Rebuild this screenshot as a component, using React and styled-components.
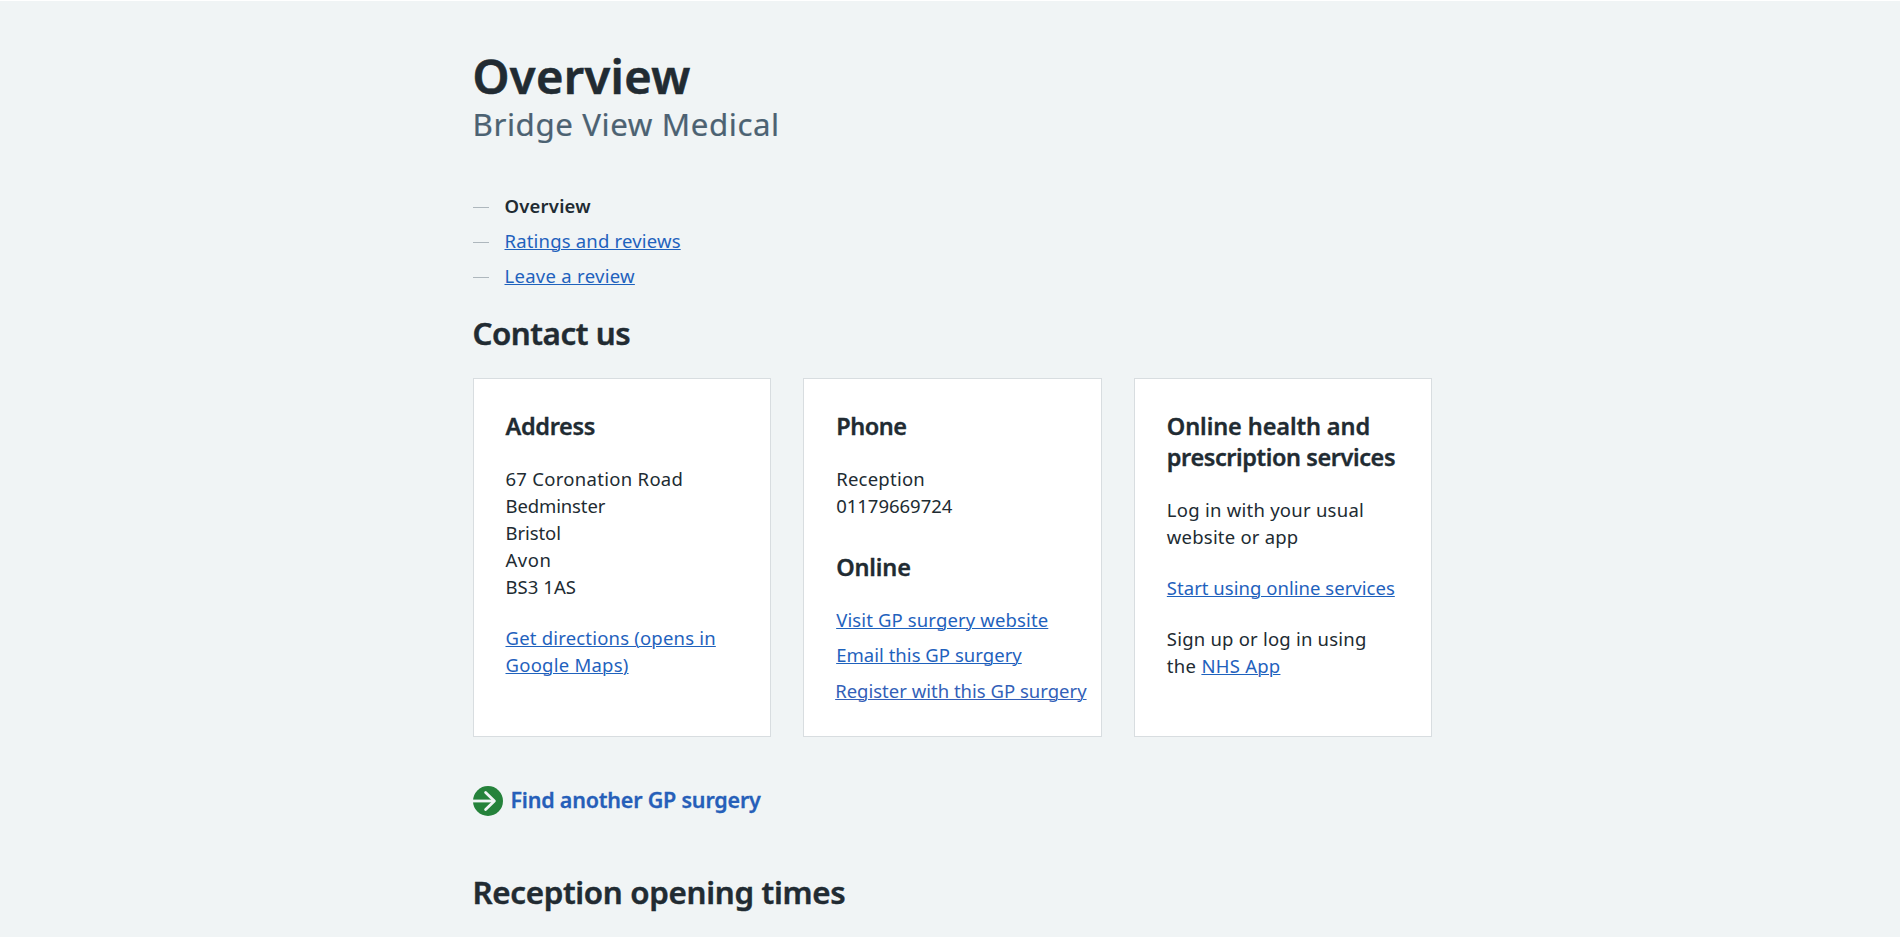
import React from "react";
import styled, { createGlobalStyle } from "styled-components";

const GlobalStyle = createGlobalStyle`
  html, body { margin: 0; background: #f0f4f5; }
  body {
    height: 937px;
    overflow: hidden;
    color: #212b32;
    font-family: "Noto Sans", "Open Sans", sans-serif;
    font-size: 18.5px;
    line-height: 27px;
  }
  *, *::before, *::after { box-sizing: border-box; }
`;

const Page = styled.div`
  height: 937px;
  overflow: hidden;
  border-top: 1px solid #fff;
  padding-top: 47px;
`;

const Container = styled.main`
  width: 960px;
  margin-left: 472.5px;
`;

const Run = styled.span`
  letter-spacing: ${(p) => p.$track || 0}px;
  white-space: nowrap;
`;

const PageTitle = styled.h1`
  margin: 0;
  font-size: 47px;
  font-weight: 600;
  line-height: 56px;
  -webkit-text-stroke: 0.6px currentColor;
`;

const Caption = styled.p`
  margin: 0;
  font-size: 31.3px;
  line-height: 40px;
  color: #4c6272;
  -webkit-text-stroke: 0.2px currentColor;
`;

const ContentsList = styled.ol`
  list-style: none;
  margin: 48px 0 0;
  padding: 0;
  display: flex;
  flex-direction: column;
  gap: 8px;
`;

const ContentsItem = styled.li`
  display: flex;
  align-items: center;
  gap: 16px;
  font-weight: ${(p) => (p.$current ? 600 : 400)};

  &::before {
    content: "";
    width: 16px;
    height: 1px;
    margin-top: 3px;
    background: #aeb7bd;
  }
`;

const Link = styled.a`
  color: ${(p) => (p.$muted ? "#335fb8" : "#1f62bd")};
  text-decoration: underline;
  text-decoration-thickness: 1px;
  text-underline-offset: 1px;
`;

const SectionHeading = styled.h2`
  margin: ${(p) => p.$top}px 0 0;
  font-size: 31.3px;
  font-weight: 600;
  line-height: 40px;
  white-space: nowrap;
  -webkit-text-stroke: 0.45px currentColor;
`;

const CardGroup = styled.div`
  margin-top: 25px;
  display: grid;
  grid-template-columns: repeat(3, 1fr);
  column-gap: 32px;
  height: 359px;
`;

const Card = styled.section`
  min-width: 0;
  background: #fff;
  border: 1px solid #d8dde0;
  padding: 32px 0 0 32px;
`;

const CardHeading = styled.h3`
  margin: ${(p) => p.$top || 0}px 0 23px;
  font-size: 23.5px;
  font-weight: 600;
  line-height: 31px;
  -webkit-text-stroke: 0.35px currentColor;
`;

const Paragraph = styled.p`
  margin: 0 0 ${(p) => p.$bottom ?? 24}px;
`;

const LinkList = styled.ul`
  list-style: none;
  margin: 0;
  padding: 0;
  display: flex;
  flex-direction: column;
  gap: 8px;
`;

const LastLink = styled.li`
  margin: 1px 0 0 -1px;
`;

const ActionLink = styled.a`
  display: flex;
  align-items: center;
  gap: 8px;
  margin-top: 49px;
  height: 30px;
  color: #265fb9;
  font-size: 21.5px;
  font-weight: 600;
  line-height: 30px;
  text-decoration: none;
  -webkit-text-stroke: 0.3px currentColor;
`;

const ActionText = styled.span`
  padding-bottom: 2px;
`;

const ActionIcon = styled.svg`
  width: 30px;
  height: 30px;
  flex: none;
`;

function Lines({ items }) {
  return items.map(([text, track], i) => (
    <React.Fragment key={text}>
      {i > 0 && <br />}
      <Run $track={track}>{text}</Run>
    </React.Fragment>
  ));
}

export default function App() {
  return (
    <>
      <GlobalStyle />
      <Page>
        <Container>
          <PageTitle><Run $track={0.36}>Overview</Run></PageTitle>
          <Caption><Run $track={0.58}>Bridge View Medical</Run></Caption>

          <ContentsList>
            <ContentsItem $current><Run $track={0.2}>Overview</Run></ContentsItem>
            <ContentsItem><Link><Run $track={0.18}>Ratings and reviews</Run></Link></ContentsItem>
            <ContentsItem><Link><Run $track={0.28}>Leave a review</Run></Link></ContentsItem>
          </ContentsList>

          <SectionHeading $top={24}><Run $track={-0.46}>Contact us</Run></SectionHeading>

          <CardGroup>
            <Card>
              <CardHeading><Run $track={-0.33}>Address</Run></CardHeading>
              <Paragraph>
                <Lines
                  items={[
                    ["67 Coronation Road", 0.29],
                    ["Bedminster", -0.12],
                    ["Bristol", -0.08],
                    ["Avon", 0.55],
                    ["BS3 1AS", 0.05],
                  ]}
                />
              </Paragraph>
              <Paragraph>
                <Link>
                  <Lines items={[["Get directions (opens in", 0.19], ["Google Maps)", 0.24]]} />
                </Link>
              </Paragraph>
            </Card>

            <Card>
              <CardHeading><Run $track={-0.48}>Phone</Run></CardHeading>
              <Paragraph $bottom={0}>
                <Lines items={[["Reception", 0.24], ["01179669724", -0.02]]} />
              </Paragraph>
              <CardHeading $top={33}><Run $track={-0.16}>Online</Run></CardHeading>
              <LinkList>
                <li><Link><Run $track={0.13}>Visit GP surgery website</Run></Link></li>
                <li><Link><Run $track={0.03}>Email this GP surgery</Run></Link></li>
                <LastLink><Link $muted><Run>Register with this GP surgery</Run></Link></LastLink>
              </LinkList>
            </Card>

            <Card>
              <CardHeading>
                <Lines items={[["Online health and", -0.1], ["prescription services", -0.42]]} />
              </CardHeading>
              <Paragraph>
                <Lines items={[["Log in with your usual", 0.25], ["website or app", 0.21]]} />
              </Paragraph>
              <Paragraph>
                <Link><Run $track={0.03}>Start using online services</Run></Link>
              </Paragraph>
              <Paragraph>
                <Run $track={0.21}>Sign up or log in using</Run>
                <br />
                <Run $track={0.3}>the </Run>
                <Link><Run $track={0.25}>NHS App</Run></Link>
              </Paragraph>
            </Card>
          </CardGroup>

          <ActionLink>
            <ActionIcon viewBox="0 0 30 30" fill="none" aria-hidden="true">
              <circle cx="15" cy="15" r="15" fill="#25823b" />
              <path d="M0 15H21" stroke="#f0f4f5" strokeWidth="2.8" />
              <path
                d="M12.6 6.4L21.4 15L12.6 23.6"
                stroke="#f0f4f5"
                strokeWidth="2.8"
                strokeLinecap="round"
                strokeLinejoin="round"
              />
            </ActionIcon>
            <ActionText><Run $track={-0.21}>Find another GP surgery</Run></ActionText>
          </ActionLink>

          <SectionHeading $top={56}><Run $track={-0.32}>Reception opening times</Run></SectionHeading>
        </Container>
      </Page>
    </>
  );
}
